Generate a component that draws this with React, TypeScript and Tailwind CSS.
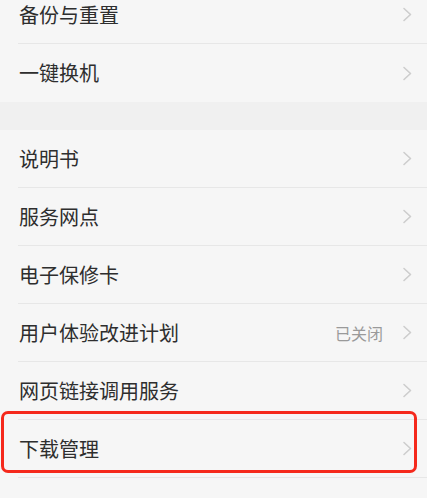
const Chevron = () => (
  <svg width="12" height="15" viewBox="0 0 12 15" className="shrink-0">
    <path d="M3 1.5 L9.5 7.5 L3 13.5" fill="none" stroke="#cdcdcd" strokeWidth="1.6" strokeLinecap="round" strokeLinejoin="round" />
  </svg>
);

interface RowProps {
  label: string;
  value?: string;
  divider?: boolean;
  highlight?: boolean;
}

const Row = ({ label, value, divider = true, highlight = false }: RowProps) => (
  <div className="relative pl-[18px]">
    <div className={`flex h-[58px] items-center pr-[14px] ${divider ? 'border-b border-[#e7e7e7]' : ''}`}>
      <span className="flex-1 pl-px text-[20px] text-[#2e2e2e]">{label}</span>
      {value && <span className="mr-[18px] text-[16px] text-[#9a9a9a]">{value}</span>}
      <Chevron />
    </div>
    {highlight && (
      <div className="pointer-events-none absolute top-[-9px] left-px h-[62px] w-[416px] rounded-[7px] border-[3px] border-[#f5291c]" />
    )}
  </div>
);

export default function App() {
  return (
    <div
      className="h-[498px] w-[427px] overflow-hidden bg-[#f0f0f0]"
      style={{ fontFamily: '"Noto Sans CJK SC", "Noto Sans", sans-serif' }}
    >
      <div className="-mt-[14px] bg-[#f6f6f6]">
        <Row label="备份与重置" />
        <Row label="一键换机" divider={false} />
      </div>
      <div className="mt-[28px] bg-[#f6f6f6] pb-[30px]">
        <Row label="说明书" />
        <Row label="服务网点" />
        <Row label="电子保修卡" />
        <Row label="用户体验改进计划" value="已关闭" />
        <Row label="网页链接调用服务" />
        <Row label="下载管理" highlight />
      </div>
    </div>
  );
}
